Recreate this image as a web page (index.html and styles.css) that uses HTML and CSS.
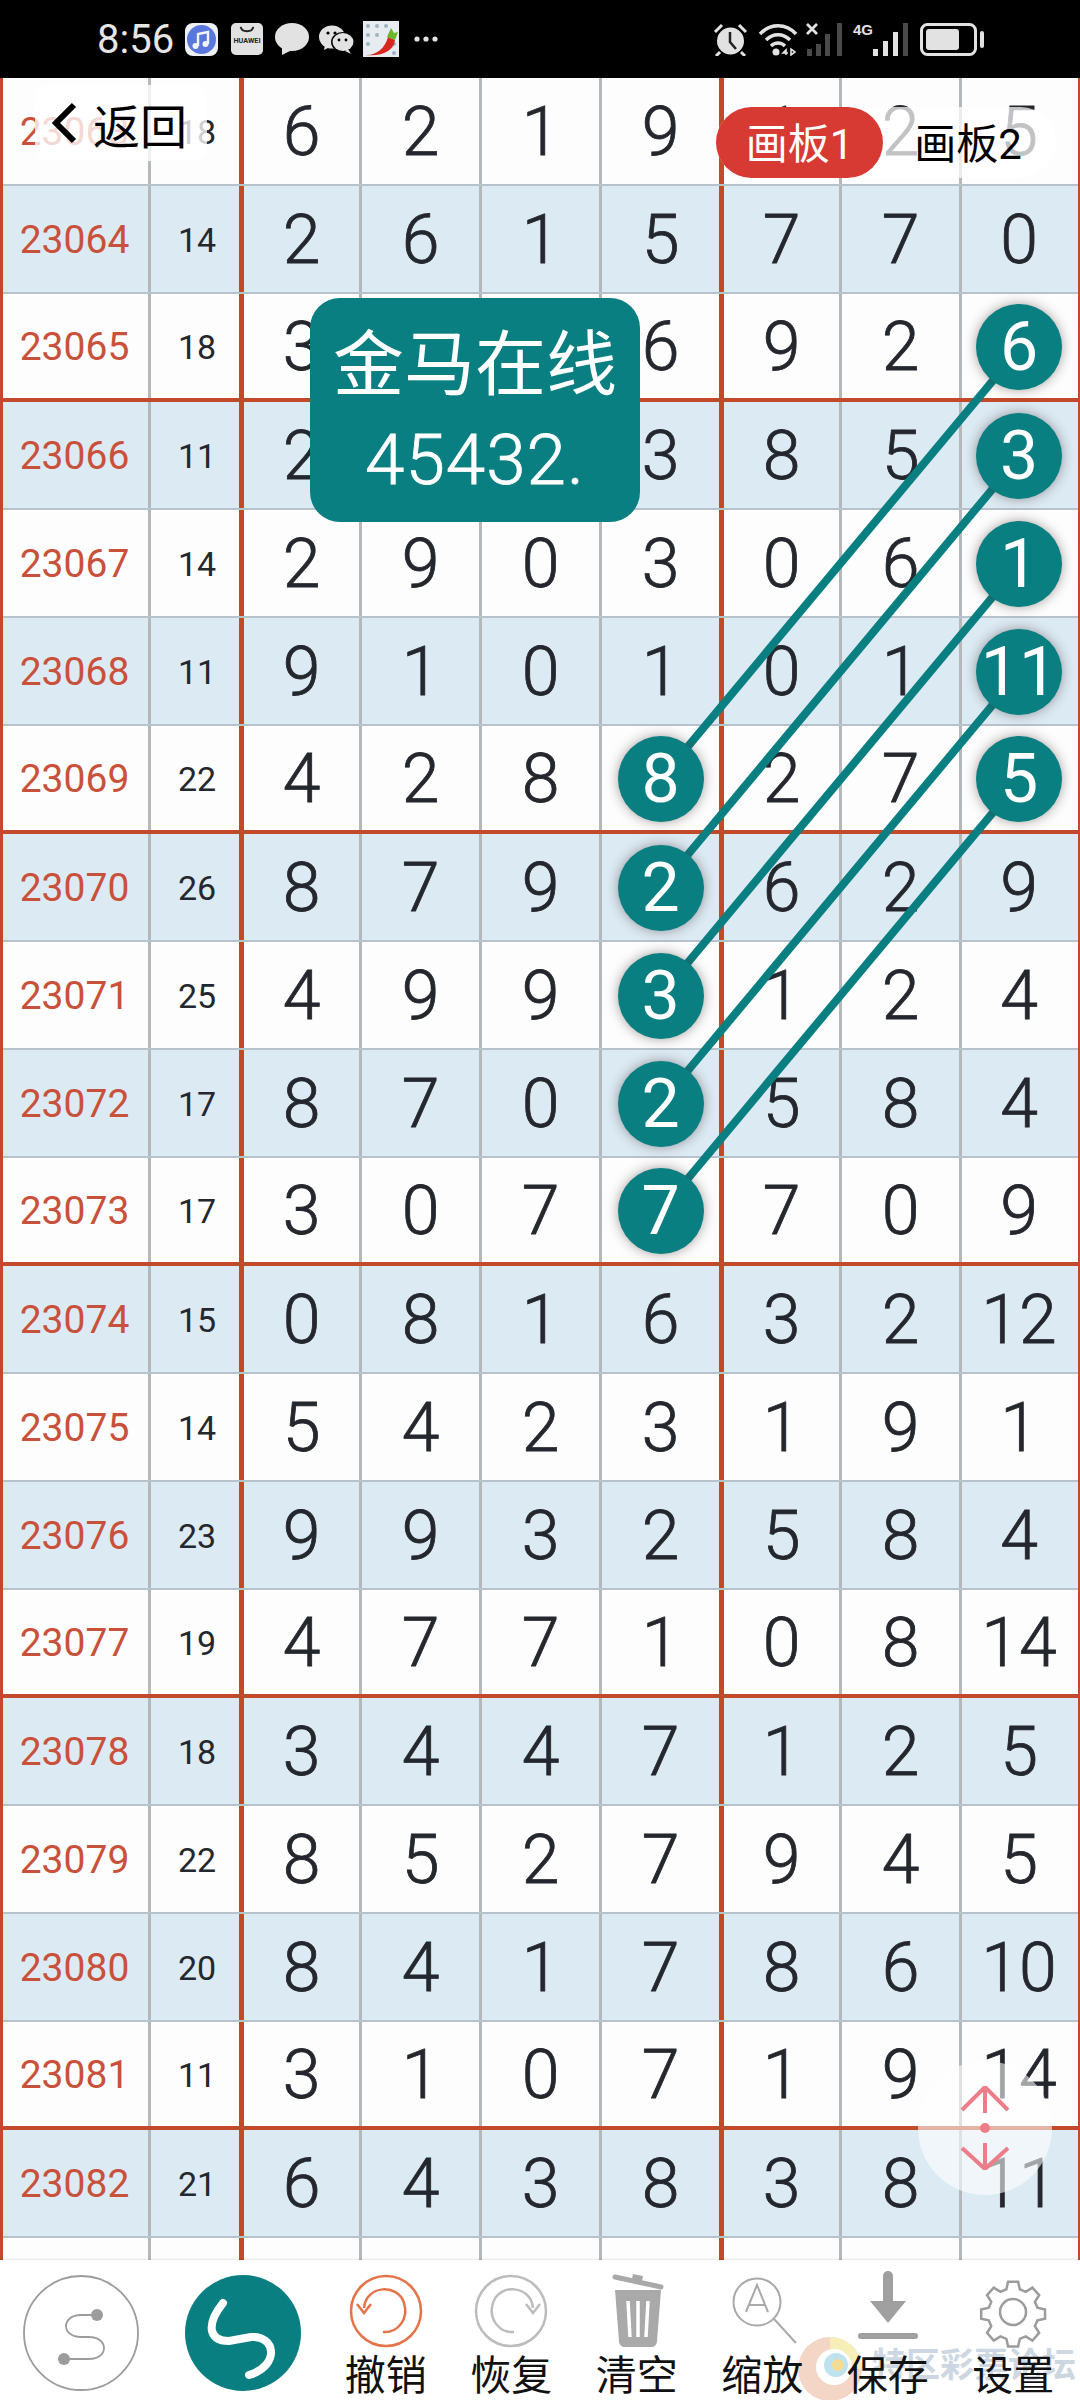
FILE: index.html
```html
<!DOCTYPE html>
<html lang="zh">
<head>
<meta charset="utf-8">
<title>画板</title>
<link rel="stylesheet" href="styles.css">
</head>
<body>
<div class="page">
  <header class="status">
    <span class="time">8:56</span>
    <svg class="ic-app" viewBox="0 0 33 33"><rect width="33" height="33" rx="8" fill="#eef0f6"/><circle cx="16.5" cy="16.5" r="14.5" fill="#5a78dc"/><path d="M13 23V11l10-2v12" fill="none" stroke="#f2f4fb" stroke-width="2.4"/><circle cx="10.5" cy="23" r="3" fill="#f2f4fb"/><circle cx="20.5" cy="21" r="3" fill="#f2f4fb"/></svg>
    <svg class="ic-hw" viewBox="0 0 33 33"><rect width="33" height="33" rx="5" fill="#e2e2e2"/><path d="M10 4c1 6 12 6 13 0" fill="none" stroke="#222" stroke-width="2"/><text x="16.5" y="21" class="hw-text">HUAWEI</text></svg>
    <svg class="ic-chat" viewBox="0 0 34 32"><ellipse cx="17" cy="14" rx="17" ry="14" fill="#e2e2e2"/><path d="M7 24l0 8 10-5z" fill="#e2e2e2"/></svg>
    <svg class="ic-wx" viewBox="0 0 35 29"><ellipse cx="13" cy="12" rx="13" ry="11.5" fill="#e2e2e2"/><path d="M6 20l-1 5 6-3z" fill="#e2e2e2"/><ellipse cx="23.5" cy="17" rx="11.5" ry="10" fill="#000"/><ellipse cx="24" cy="17" rx="10.5" ry="9" fill="#e2e2e2"/><path d="M29 24l3 5-6-3z" fill="#e2e2e2"/><circle cx="9" cy="8" r="1.6" fill="#000"/><circle cx="16" cy="8" r="1.6" fill="#000"/><circle cx="20" cy="15" r="1.4" fill="#000"/><circle cx="27" cy="15" r="1.4" fill="#000"/></svg>
    <svg class="ic-pep" viewBox="0 0 36 36"><rect width="36" height="36" fill="#e6ecef"/><g fill="#9fb4c0"><circle cx="5" cy="5" r="2"/><circle cx="14" cy="5" r="2"/><circle cx="23" cy="5" r="2"/><circle cx="5" cy="14" r="2"/><circle cx="14" cy="14" r="2"/><circle cx="5" cy="23" r="2"/><circle cx="31" cy="23" r="2"/><circle cx="31" cy="32" r="2"/></g><path d="M2 34c10 1 20-6 23-18l7 3c-1 10-12 17-30 15z" fill="#d8281e"/><path d="M24 16l4-9 3 5 4-1-3 8z" fill="#6cb52d"/></svg>
    <svg class="ic-dots" viewBox="0 0 24 6"><circle cx="3" cy="3" r="2.6" fill="#e2e2e2"/><circle cx="12" cy="3" r="2.6" fill="#e2e2e2"/><circle cx="21" cy="3" r="2.6" fill="#e2e2e2"/></svg>
    <span class="status-gap"></span>
    <svg class="ic-alarm" viewBox="0 0 35 33"><circle cx="17.500" cy="18" r="13.500" fill="#e2e2e2"/><path d="M17 9v10l6 7" fill="none" stroke="#222" stroke-width="2.500"/><path d="M2 9l7-7M33 9l-7-7M7 29l-4 4M28 29l4 4" stroke="#e2e2e2" stroke-width="3" fill="none"/></svg>
    <svg class="ic-wifi" viewBox="0 0 40 33"><path d="M2 11c10-11 26-11 36 0M8 17c7-7 17-7 24 0M13 23c4-4 10-4 14 0" fill="none" stroke="#e2e2e2" stroke-width="3.500"/><circle cx="18" cy="29" r="3.500" fill="#e2e2e2"/><path d="M28 32v-5l-3 3h5M33 26v6l4-3z" fill="none" stroke="#e2e2e2" stroke-width="1.600"/></svg>
    <svg class="ic-sig1" viewBox="0 0 37 33"><path d="M1 1l10 10M11 1L1 11" stroke="#e2e2e2" stroke-width="2.800"/><g fill="#4a4a4a"><rect x="1" y="26" width="5" height="7"/><rect x="10" y="21" width="5" height="12"/><rect x="19" y="11" width="5" height="22"/><rect x="31" y="0" width="5" height="33"/></g></svg>
    <svg class="ic-sig2" viewBox="0 0 55 33"><text x="0" y="12" class="sig-text">4G</text><g fill="#e2e2e2"><rect x="20" y="26" width="5" height="7"/><rect x="30" y="18" width="5" height="15"/><rect x="40" y="9" width="5" height="24"/></g><rect x="50" y="0" width="5" height="33" fill="#4a4a4a"/></svg>
    <svg class="ic-bat" viewBox="0 0 64 33"><rect x="1.500" y="1.500" width="54" height="30" rx="6" fill="none" stroke="#e2e2e2" stroke-width="3"/><rect x="6" y="6" width="33" height="21" rx="3" fill="#e2e2e2"/><rect x="60" y="8" width="4" height="17" rx="2" fill="#e2e2e2"/></svg>
  </header>

  <main class="board">
    <div class="row"><span class="id">23063</span><span class="n">18</span><span class="d">6</span><span class="d">2</span><span class="d">1</span><span class="d">9</span><span class="d">1</span><span class="d">2</span><span class="d">5</span></div>
    <div class="row blue"><span class="id">23064</span><span class="n">14</span><span class="d">2</span><span class="d">6</span><span class="d">1</span><span class="d">5</span><span class="d">7</span><span class="d">7</span><span class="d">0</span></div>
    <div class="row sep"><span class="id">23065</span><span class="n">18</span><span class="d">3</span><span class="d"></span><span class="d"></span><span class="d">6</span><span class="d">9</span><span class="d">2</span><span class="d"><b class="ball">6</b></span></div>
    <div class="row blue"><span class="id">23066</span><span class="n">11</span><span class="d">2</span><span class="d"></span><span class="d"></span><span class="d">3</span><span class="d">8</span><span class="d">5</span><span class="d"><b class="ball">3</b></span></div>
    <div class="row"><span class="id">23067</span><span class="n">14</span><span class="d">2</span><span class="d">9</span><span class="d">0</span><span class="d">3</span><span class="d">0</span><span class="d">6</span><span class="d"><b class="ball">1</b></span></div>
    <div class="row blue"><span class="id">23068</span><span class="n">11</span><span class="d">9</span><span class="d">1</span><span class="d">0</span><span class="d">1</span><span class="d">0</span><span class="d">1</span><span class="d"><b class="ball">11</b></span></div>
    <div class="row sep"><span class="id">23069</span><span class="n">22</span><span class="d">4</span><span class="d">2</span><span class="d">8</span><span class="d"><b class="ball">8</b></span><span class="d">2</span><span class="d">7</span><span class="d"><b class="ball">5</b></span></div>
    <div class="row blue"><span class="id">23070</span><span class="n">26</span><span class="d">8</span><span class="d">7</span><span class="d">9</span><span class="d"><b class="ball">2</b></span><span class="d">6</span><span class="d">2</span><span class="d">9</span></div>
    <div class="row"><span class="id">23071</span><span class="n">25</span><span class="d">4</span><span class="d">9</span><span class="d">9</span><span class="d"><b class="ball">3</b></span><span class="d">1</span><span class="d">2</span><span class="d">4</span></div>
    <div class="row blue"><span class="id">23072</span><span class="n">17</span><span class="d">8</span><span class="d">7</span><span class="d">0</span><span class="d"><b class="ball">2</b></span><span class="d">5</span><span class="d">8</span><span class="d">4</span></div>
    <div class="row sep"><span class="id">23073</span><span class="n">17</span><span class="d">3</span><span class="d">0</span><span class="d">7</span><span class="d"><b class="ball">7</b></span><span class="d">7</span><span class="d">0</span><span class="d">9</span></div>
    <div class="row blue"><span class="id">23074</span><span class="n">15</span><span class="d">0</span><span class="d">8</span><span class="d">1</span><span class="d">6</span><span class="d">3</span><span class="d">2</span><span class="d">12</span></div>
    <div class="row"><span class="id">23075</span><span class="n">14</span><span class="d">5</span><span class="d">4</span><span class="d">2</span><span class="d">3</span><span class="d">1</span><span class="d">9</span><span class="d">1</span></div>
    <div class="row blue"><span class="id">23076</span><span class="n">23</span><span class="d">9</span><span class="d">9</span><span class="d">3</span><span class="d">2</span><span class="d">5</span><span class="d">8</span><span class="d">4</span></div>
    <div class="row sep"><span class="id">23077</span><span class="n">19</span><span class="d">4</span><span class="d">7</span><span class="d">7</span><span class="d">1</span><span class="d">0</span><span class="d">8</span><span class="d">14</span></div>
    <div class="row blue"><span class="id">23078</span><span class="n">18</span><span class="d">3</span><span class="d">4</span><span class="d">4</span><span class="d">7</span><span class="d">1</span><span class="d">2</span><span class="d">5</span></div>
    <div class="row"><span class="id">23079</span><span class="n">22</span><span class="d">8</span><span class="d">5</span><span class="d">2</span><span class="d">7</span><span class="d">9</span><span class="d">4</span><span class="d">5</span></div>
    <div class="row blue"><span class="id">23080</span><span class="n">20</span><span class="d">8</span><span class="d">4</span><span class="d">1</span><span class="d">7</span><span class="d">8</span><span class="d">6</span><span class="d">10</span></div>
    <div class="row sep"><span class="id">23081</span><span class="n">11</span><span class="d">3</span><span class="d">1</span><span class="d">0</span><span class="d">7</span><span class="d">1</span><span class="d">9</span><span class="d">14</span></div>
    <div class="row blue"><span class="id">23082</span><span class="n">21</span><span class="d">6</span><span class="d">4</span><span class="d">3</span><span class="d">8</span><span class="d">3</span><span class="d">8</span><span class="d">11</span></div>
    <div class="row"><span class="id"></span><span class="n"></span><span class="d"></span><span class="d"></span><span class="d"></span><span class="d"></span><span class="d"></span><span class="d"></span><span class="d"></span></div>

    <svg class="links" viewBox="0 0 1080 2182">
      <line x1="1020" y1="270" x2="660" y2="702"/>
      <line x1="1020" y1="378" x2="660" y2="810"/>
      <line x1="1020" y1="486" x2="660" y2="918"/>
      <line x1="1020" y1="594" x2="660" y2="1026"/>
      <line x1="1020" y1="702" x2="660" y2="1134"/>
    </svg>

    <div class="back">
      <svg class="back-ic" viewBox="0 0 26 42"><path d="M23 3L5 21l18 18" fill="none" stroke="#000" stroke-width="6"/></svg>
      <span>返回</span>
    </div>
    <div class="tabs"><span class="tab on">画板1</span><span class="tab">画板2</span></div>
    <div class="note"><span>金马在线</span><span class="note-num">45432.</span></div>
    <div class="float">
      <svg viewBox="0 0 50 84"><g fill="none" stroke="#ee7d8a" stroke-width="4"><path d="M2 24L25 1l23 23M25 1v26M2 62l23 21 23-21M25 83V57"/></g><circle cx="25" cy="42" r="5" fill="#ee7d8a"/></svg>
    </div>
  </main>

  <footer class="tools">
    <div class="mode">
      <svg class="mode-ic" viewBox="0 0 116 120"><circle cx="58" cy="60" r="57" fill="none" stroke="#9c9c9c" stroke-width="1.800"/><path d="M74 42H58C38 42 38 64 58 64h8c20 0 20 22 0 22H44" fill="none" stroke="#9c9c9c" stroke-width="1.800"/><circle cx="74" cy="42" r="6" fill="#9c9c9c"/><circle cx="41" cy="86" r="6" fill="#9c9c9c"/></svg>
      <svg class="mode-ic" viewBox="0 0 116 120"><circle cx="58" cy="60" r="58" fill="#0a7f81"/><path d="M38 30C22 50 22 68 44 68l22-4c24-2 30 28 -2 38" fill="none" stroke="#fff" stroke-width="8" stroke-linecap="round"/></svg>
    </div>
    <div class="tool">
      <svg class="tool-ic" viewBox="0 0 80 80"><circle cx="40" cy="40" r="35" fill="none" stroke="#e5734a" stroke-width="2.500"/><path d="M18 37C20 14 52 12 58 32c5 16-6 30-21 29" fill="none" stroke="#e5734a" stroke-width="2.500"/><path d="M11 33l7 9 7-9" fill="none" stroke="#e5734a" stroke-width="2.500"/></svg>
      <span>撤销</span>
    </div>
    <div class="tool">
      <svg class="tool-ic" viewBox="0 0 80 80"><circle cx="40" cy="40" r="35" fill="none" stroke="#bcbcbc" stroke-width="2.500"/><path d="M62 37C60 14 28 12 22 32c-5 16 6 30 21 29" fill="none" stroke="#bcbcbc" stroke-width="2.500"/><path d="M55 33l7 9 7-9" fill="none" stroke="#bcbcbc" stroke-width="2.500"/></svg>
      <span>恢复</span>
    </div>
    <div class="tool">
      <svg class="tool-ic" viewBox="0 0 80 80"><path d="M18 6l46 10" stroke="#a9a9a9" stroke-width="5" stroke-linecap="round"/><path d="M35 8l1-5 10 2-1 5z" fill="#a9a9a9"/><path d="M18 19h46l-4 51c0 4-3 6-6 6H28c-3 0-6-2-6-6z" fill="#a9a9a9"/><path d="M31 30l2 36M41 30v36M51 30l-2 36" stroke="#fff" stroke-width="3.500"/></svg>
      <span>清空</span>
    </div>
    <div class="tool">
      <svg class="tool-ic" viewBox="0 0 80 80"><circle cx="35" cy="31" r="23.500" fill="none" stroke="#a9a9a9" stroke-width="2"/><path d="M24 41l11-27 11 27M27 34h16M52 48l22 24" fill="none" stroke="#a9a9a9" stroke-width="2"/></svg>
      <span>缩放</span>
    </div>
    <div class="tool">
      <svg class="tool-ic" viewBox="0 0 80 80"><path d="M40 5v26" stroke="#a0a0a0" stroke-width="10" stroke-linecap="round"/><path d="M22 30h36L40 52z" fill="#a0a0a0"/><rect x="10" y="62" width="60" height="6" rx="3" fill="#a0a0a0"/></svg>
      <span>保存</span>
    </div>
    <div class="tool">
      <svg class="tool-ic" viewBox="0 0 80 80"><path d="M34 8h12l2 9 7 3 8-5 8 9-5 8 3 7 9 2v11l-9 2-3 7 5 8-8 9-8-5-7 3-2 9H34l-2-9-7-3-8 5-8-9 5-8-3-7-9-2V41l9-2 3-7-5-8 8-9 8 5 7-3z" transform="translate(6.500 4) scale(.84)" fill="none" stroke="#9c9c9c" stroke-width="3"/><circle cx="40" cy="41" r="13" fill="none" stroke="#9c9c9c" stroke-width="2.500"/></svg>
      <span>设置</span>
    </div>
    <div class="mark">
      <svg class="mark-logo" viewBox="0 0 64 64"><circle cx="32" cy="32" r="32" fill="#f3d6c6"/><path d="M32 0a32 32 0 0 1 32 32H44A12 12 0 0 0 32 20z" fill="#f6efb8"/><circle cx="36" cy="30" r="18" fill="#fff"/><circle cx="38" cy="28" r="12" fill="#bfe3ee"/><circle cx="40" cy="28" r="6" fill="#f5dc95"/></svg>
      <span class="mark-text">特区彩票论坛</span>
    </div>
  </footer>
</div>
</body>
</html>
```

FILE: styles.css
```css
* { box-sizing: border-box; }
html, body { margin: 0; padding: 0; }
body { font-family: Roboto, "Noto Sans CJK SC", sans-serif; background: #fff; }
.page { width: 1080px; height: 2400px; display: flex; flex-direction: column; overflow: hidden; }

.status { height: 78px; flex: none; background: #000; display: flex; align-items: center; padding: 0 96px 0 97px; color: #e6e6e6; }
.time { font-size: 40px; width: 88px; line-height: 1; padding-top: 2px; }
.status svg { display: block; flex: none; }
.ic-app { width: 33px; height: 33px; }
.ic-hw { width: 32px; height: 32px; margin-left: 13px; }
.hw-text { font: 700 7.5px Roboto, sans-serif; text-anchor: middle; fill: #222; }
.ic-chat { width: 34px; height: 32px; margin-left: 12px; }
.ic-wx { width: 35px; height: 29px; margin-left: 10px; }
.ic-pep { width: 36px; height: 36px; margin-left: 9px; }
.ic-dots { width: 24px; height: 6px; margin-left: 15px; }
.status-gap { flex: 1; }
.ic-alarm { width: 35px; height: 33px; }
.ic-wifi { width: 40px; height: 33px; margin-left: 10px; }
.ic-sig1 { width: 37px; height: 33px; margin-left: 8px; }
.ic-sig2 { width: 55px; height: 33px; margin-left: 10px; }
.sig-text { font: 700 15px "Liberation Sans", sans-serif; fill: #e2e2e2; }
.ic-bat { width: 64px; height: 33px; margin-left: 12px; }

.board { position: relative; flex: none; height: 2182px; overflow: hidden; border-left: 3px solid #c04a2a; border-right: 2px solid #c04a2a; background: #fff; }
.row { height: 108px; display: grid; grid-template-columns: 148px 93px 118px 120px 120px 122px 118px 120px 114px; background: #fdfdfd; border-bottom: 2.5px solid #b7c2ca; }
.row.blue { background: #dceaf3; }
.row.sep { border-bottom: 4px solid #c04a2a; }
.row > span { display: flex; align-items: center; justify-content: center; border-right: 3px solid #b5b8ba; color: #24272d; padding-top: 2px; }
.row > span:nth-child(2), .row > span:nth-child(6) { border-right: 5px solid #c04a2a; }
.row > span:last-child { border-right: 0; }
.row > .id { color: #c9503a; font-size: 39px; padding-right: 2px; }
.n { font-size: 34px; padding-left: 4px; }
.d { font-size: 68px; font-weight: 300; -webkit-text-stroke: .8px currentColor; }

.ball { position: relative; z-index: 3; width: 86px; height: 86px; flex: none; border-radius: 50%; background: #0a7f81; color: #fff; font-weight: 400; font-size: 68px; display: flex; align-items: center; justify-content: center; box-shadow: 0 0 12px rgba(60, 40, 40, .45); -webkit-text-stroke: 0; }

.links { position: absolute; left: -3px; top: 0; width: 1080px; height: 2182px; z-index: 2; pointer-events: none; }
.links line { stroke: #0a7f81; stroke-width: 8; }

.back { position: absolute; z-index: 4; left: 32px; top: 7px; width: 172px; height: 76px; padding-left: 16px; display: flex; align-items: center; gap: 16px; background: rgba(255, 255, 255, .78); color: #000; font-size: 47px; border-radius: 14px; }
.back-ic { width: 26px; height: 42px; flex: none; }

.tabs { position: absolute; z-index: 4; left: 713px; top: 29px; width: 340px; height: 71px; display: flex; align-items: center; background: rgba(255, 255, 255, .72); border-radius: 36px; }
.tab { width: 170px; height: 71px; padding-bottom: 4px; display: flex; align-items: center; justify-content: center; font-size: 42px; color: #000; border-radius: 36px; }
.tab.on { width: 167px; background: #d63a33; color: #fff; }

.note { position: absolute; z-index: 5; left: 307px; top: 220px; width: 330px; height: 224px; border-radius: 30px; background: #0a7f81; color: #fff; display: flex; flex-direction: column; align-items: center; padding-top: 19px; font-size: 71px; line-height: 95px; }
.note-num { font-size: 71px; font-weight: 300; letter-spacing: 1px; -webkit-text-stroke: .8px currentColor; }

.float { position: absolute; z-index: 6; left: 915px; top: 1983px; width: 134px; height: 134px; border-radius: 50%; background: rgba(255, 255, 255, .58); display: flex; align-items: center; justify-content: center; }
.float svg { width: 50px; height: 84px; }

.tools { flex: 1; position: relative; background: #fff; display: flex; align-items: flex-start; padding: 11px 3px 0 23px; box-shadow: 0 -1px 2px rgba(0, 0, 0, .1); }
.mode { width: 300px; display: flex; gap: 46px; padding-top: 2px; flex: none; }
.mode-ic { width: 116px; height: 120px; flex: none; }
.tool { position: relative; z-index: 1; width: 125.500px; flex: none; display: flex; flex-direction: column; align-items: center; font-size: 41px; line-height: 50px; color: #111; }
.tool-ic { width: 80px; height: 80px; }
.mark { position: absolute; left: 798px; top: 77px; display: flex; align-items: flex-start; gap: 10px; }
.mark-logo { width: 64px; height: 64px; flex: none; }
.mark-text { font-size: 34px; font-weight: 700; color: #cdd7e1; white-space: nowrap; line-height: 44px; margin-top: 6px; }
```
